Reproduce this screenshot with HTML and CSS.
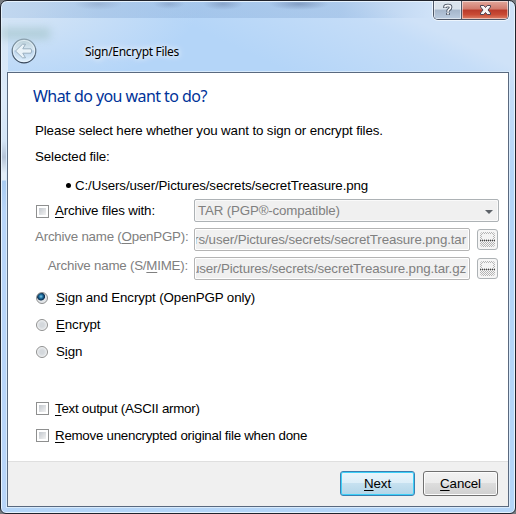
FILE: index.html
```html
<!DOCTYPE html>
<html lang="en">
<head>
<meta charset="utf-8">
<title>Sign/Encrypt Files</title>
<link rel="stylesheet" href="styles.css">
</head>
<body>
<div class="window">
  <div class="blur-text"></div>
  <header class="titlebar">
    <svg class="back" width="26" height="26" viewBox="0 0 26 26">
      <defs><linearGradient id="disc" x1="0" y1="0" x2="0" y2="1"><stop offset="0" stop-color="#b9ced6"/><stop offset=".45" stop-color="#d8e8f4"/><stop offset=".5" stop-color="#bdd5ec"/><stop offset="1" stop-color="#e2f2ff"/></linearGradient>
      <linearGradient id="ring" x1="0" y1="0" x2="0" y2="1"><stop offset="0" stop-color="#8ba0ad"/><stop offset="1" stop-color="#38475a"/></linearGradient></defs>
      <circle cx="13" cy="13" r="11.8" fill="url(#disc)" stroke="url(#ring)" stroke-width="1.2"/>
      <circle cx="13" cy="13" r="10.6" fill="none" stroke="#edf6fc" stroke-opacity=".7"/>
      <path d="M4.500 13 11.500 6.200H14.500L11.800 10.800H20Q21.500 13 20 15.200H11.800L14.500 19.800H11.500Z" fill="#e9f2f8" stroke="#99afbf" stroke-width="1" stroke-linejoin="round"/>
    </svg>
    <span class="title">Sign/Encrypt Files</span>
  </header>
  <div class="caption-buttons">
    <div class="cap help"><svg width="10" height="14" viewBox="0 0 10 14"><g fill="none"><path d="M2 5V4Q2 2.500 5 2.500T7.500 4.500Q7.500 5.700 6 6.500Q5 7 5 8.700M5 9.800V12" stroke="#495261" stroke-width="3.600"/><path d="M2 4.500V4Q2 2.500 5 2.500T7.500 4.500Q7.500 5.700 6 6.500Q5 7 5 8.700M5 9.800V11.500" stroke="#f5f7fa" stroke-width="1.800"/></g></svg></div>
    <div class="cap close"><svg width="13" height="12" viewBox="0 0 13 12"><path d="M1.500 1.500H4.800L6.500 3.500 8.200 1.500H11.500V3L9 6 11.500 9V10.500H8.200L6.500 8.500 4.800 10.500H1.500V9L4 6 1.500 3Z" fill="#f8f5f5" stroke="#4d4453"/></svg></div>
  </div>
  <main class="panel">
    <section class="page">
      <h1>What do you want to do?</h1>
      <p class="intro"><span>Please select here whether you want to sign or encrypt files.</span></p>
      <p class="selected"><span>Selected file:</span></p>
      <p class="file"><i class="dot"></i><span>C:/Users/user/Pictures/secrets/secretTreasure.png</span></p>
      <div class="row archive">
        <label class="option"><i class="check"></i><span class="snug"><u>A</u>rchive files with:</span></label>
        <div class="combo"><span class="snug">TAR (PGP®-compatible)</span><i class="arrow"></i></div>
      </div>
      <div class="row">
        <label class="name"><span>Archive name (<u>O</u>penPGP):</span></label>
        <div class="field"><div><span>C:/Users/user/Pictures/secrets/secretTreasure.png.tar</span></div></div>
        <div class="browse"><i></i></div>
      </div>
      <div class="row">
        <label class="name"><span>Archive name (S/<u>M</u>IME):</span></label>
        <div class="field"><div><span>C:/Users/user/Pictures/secrets/secretTreasure.png.tar.gz</span></div></div>
        <div class="browse"><i></i></div>
      </div>
      <div class="radios">
        <label class="option"><i class="radio on"></i><span><u>S</u>ign and Encrypt (OpenPGP only)</span></label>
        <label class="option"><i class="radio"></i><span><u>E</u>ncrypt</span></label>
        <label class="option"><i class="radio"></i><span>S<u>i</u>gn</span></label>
      </div>
      <div class="checks">
        <label class="option"><i class="check"></i><span class="tight"><u>T</u>ext output (ASCII armor)</span></label>
        <label class="option"><i class="check"></i><span class="tight"><u>R</u>emove unencrypted original file when done</span></label>
      </div>
    </section>
    <footer>
      <button class="btn primary"><span><u>N</u>ext</span></button>
      <button class="btn"><span><u>C</u>ancel</span></button>
    </footer>
  </main>
</div>
</body>
</html>
```
FILE: styles.css
```css
* { box-sizing: border-box; }
body { margin: 0; background: #777b80; font: 13.33px/16px "Liberation Sans", Arial, sans-serif; letter-spacing: -.115px; color: #000; }
h1, p { margin: 0; font-weight: normal; }
span { white-space: nowrap; }
u { text-decoration: underline 1px; text-underline-offset: 2px; text-decoration-skip-ink: none; }
.snug { letter-spacing: -.16px; }
.tight { letter-spacing: -.26px; }
.window {
  position: relative; width: 516px; height: 514px; padding: 0 6px 6px;
  border: 1px solid #20232c; border-radius: 7px 7px 6px 6px;
  box-shadow: inset 0 0 0 1px #e6f2fd; overflow: hidden;
  background:
    radial-gradient(ellipse 24px 6px at 97px 3px, #8095b866, transparent),
    radial-gradient(ellipse 16px 5px at 168px 3px, #7088ae66, transparent),
    radial-gradient(ellipse 20px 6px at 222px 3px, #7088ae88, transparent),
    radial-gradient(ellipse 30px 6px at 298px 3px, #627aa388, transparent),
    linear-gradient(90deg, #8fb3dd44, #8fb3dd77 100px 340px, transparent 430px) 0 0 / 100% 17px no-repeat,
    radial-gradient(ellipse 200px 90px at 0 0, #d3e4f6 20%, transparent),
    linear-gradient(205deg, #cfe2f8 0 60px, #c5ddf8 80px, transparent 160px) 0 0 / 100% 180px no-repeat,
    linear-gradient(#dceaf9 100px, #d4e4f5 140px, #b5c4d8 156px, #e2edf8 172px, #e2edf8 179px, #a9cbf1 180px, #b8d5f9 210px) 0 0 / 7px 100% no-repeat,
    #b4d5f8;
}
.blur-text { position: absolute; left: 0; top: 27px; width: 49px; height: 11px; background: #91b8b5; opacity: .45; filter: blur(4px); }
.titlebar { position: relative; display: flex; align-items: center; height: 71px; padding: 28px 0 0 4px; }
.back { flex: none; }
.title { margin: 2px 0 0 48px; font: 12px/16px "Noto Sans", sans-serif; letter-spacing: -.32px; text-shadow: 0 0 5px #fff, 0 0 8px #fff; }
.caption-buttons { position: absolute; right: 6px; top: 0; display: flex; width: 76px; height: 19px; border: 1px solid #4e5767; border-top: 0; border-radius: 0 0 5px 5px; overflow: hidden; box-shadow: 0 0 0 1px #edf5fd; }
.cap { display: grid; place-items: center; box-shadow: inset 0 0 0 1px #ffffff80; }
.help { width: 28px; border-right: 1px solid #4e5767; background: linear-gradient(#dae3ec 0 45%, #a5b6cb 50%, #bacbdf); }
.close { flex: 1; background: linear-gradient(#e2a89c, #d17a6c 45%, #b93a2a 50%, #c94b35 75%, #dc8068); }
.panel { display: flex; flex-direction: column; width: 502px; height: 435px; background: #fff; border: 1px solid #59697f; outline: 1px solid #d8eafb; }
.page { height: 388px; padding: 13px 9px 0 27px; }
h1 { height: 34px; margin-left: -2px; font: 16px/20px "Noto Sans", sans-serif; letter-spacing: -.56px; color: #003399; }
.intro { height: 27px; padding-top: 3px; }
.selected { height: 28px; padding-top: 2px; }
.file { display: flex; align-items: flex-start; height: 24px; padding: 3px 0 0 31px; }
.dot { width: 5px; height: 5px; margin: 5px 4px 0 0; border-radius: 50%; background: #000; }
.row { display: flex; height: 29px; color: #808080; }
.option { display: flex; align-items: center; height: 27px; }
.archive .option { width: 159px; height: 23px; padding-top: 1px; color: #000; }
.check { width: 13px; height: 13px; margin: 0 6px 0 1px; border: 1px solid #8e8f8f; background: linear-gradient(135deg, #c3c8ce, #f2f2f2) content-box #f4f4f4; padding: 2px; }
.combo { display: flex; align-items: center; justify-content: space-between; width: 305px; height: 23px; padding: 0 5px 0 3px; border: 1px solid #adb2b5; border-radius: 2px; background: #f0f0f0; box-shadow: inset 0 0 0 1px #fafafa; }
.arrow { border: 4px solid transparent; border-top-color: #5d6268; border-bottom: 0; margin-top: 2px; }
.name { width: 159px; padding: 1px 6px 0 0; text-align: right; letter-spacing: -.22px; }
.field { width: 276px; height: 23px; padding: 1px; border: 1px solid #b4b4b4; border-radius: 2px; }
.field div { display: flex; justify-content: flex-end; align-items: center; height: 19px; padding-right: 2px; overflow: hidden; background: #f0f0f0; }
.browse { width: 21px; height: 21px; margin: 1px 0 0 7px; padding: 2px; border: 1px solid #adb2b5; border-radius: 3px; background: #f6f6f6; }
.browse i { position: relative; display: block; width: 15px; height: 15px; border-radius: 3px; background: repeating-linear-gradient(90deg, #444 0 1px, transparent 1px 2px) 0 8px / 100% 1px no-repeat, repeating-conic-gradient(#b4b4b4 0 25%, #f6f6f6 0 50%) 0 0 / 2px 2px; }
.browse i::before { content: ""; position: absolute; left: 2px; top: 2px; width: 11px; height: 5px; background: #f4f4f4; }
.radios { margin-top: -2px; }
.radio { width: 12px; height: 12px; margin: 0 8px 0 1px; border: 1px solid #8e8f8f; border-radius: 50%; background: radial-gradient(circle at 50% 50%, #d4d8dc 0 2px, #e3e6e9 4px, #f8f8f8 5px); }
.radio.on { background: radial-gradient(circle at 40% 35%, #7ccbea 0, #1c6a9b 2px, #0c2c4c 3.6px, #e3e6e9 4.4px); }
.checks { padding-top: 30px; }
footer { flex: 1; display: flex; justify-content: flex-end; gap: 8px; padding: 9px 10px 0 0; background: #f0f0f0; border-top: 1px solid #dfdfdf; }
.btn { width: 75px; height: 25px; padding: 0; font: inherit; letter-spacing: inherit; color: #000; border: 1px solid #707070; border-radius: 3px; box-shadow: inset 0 0 0 1px #fcfcfc; background: linear-gradient(#f2f2f2, #ebebeb 49%, #dddddd 50%, #cfcfcf); }
.primary { border-color: #3c7fb1; box-shadow: inset 0 0 0 1px #3dd0f8; background: linear-gradient(#ebf5fb, #dceef8 49%, #c6e1f0 50%, #b2d5e8); }
```
